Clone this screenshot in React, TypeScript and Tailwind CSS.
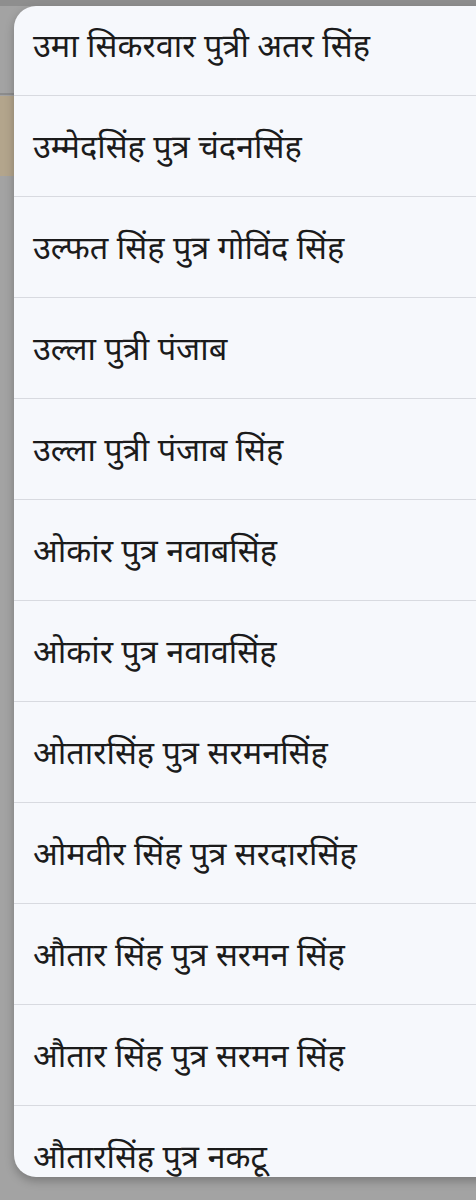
const names = [
  "उमा सिकरवार पुत्री अतर सिंह",
  "उम्मेदसिंह पुत्र चंदनसिंह",
  "उल्फत सिंह पुत्र गोविंद सिंह",
  "उल्ला पुत्री पंजाब",
  "उल्ला पुत्री पंजाब सिंह",
  "ओकांर पुत्र नवाबसिंह",
  "ओकांर पुत्र नवावसिंह",
  "ओतारसिंह पुत्र सरमनसिंह",
  "ओमवीर सिंह पुत्र सरदारसिंह",
  "औतार सिंह पुत्र सरमन सिंह",
  "औतार सिंह पुत्र सरमन सिंह",
  "औतारसिंह पुत्र नकटू",
];

export default function App() {
  return (
    <div className="relative h-[1200px] w-[476px] overflow-hidden bg-[#a3a3a3]">
      {/* dimmed page behind the sheet */}
      <div className="h-[6px] bg-[#8e8e8e]" />
      <div className="absolute left-0 top-[93px] h-[2px] w-[14px] bg-[#8c8c8c]" />
      <div className="absolute left-0 top-[96px] h-[80px] w-[14px] bg-[#b3a58c]" />

      <div className="absolute left-[14px] top-[6px] h-[1171px] w-[480px] overflow-hidden rounded-l-[22px] bg-[#f6f8fc] shadow-[0_4px_10px_rgba(0,0,0,0.25)]">
        <ul className="-mt-[11px]">
          {names.map((name, i) => (
            <li
              key={i}
              className="flex h-[101px] items-center border-b border-[#d8dae0] pl-[19px] pt-[1px] text-[32.5px] text-[#1b1b1b]"
              style={{ fontFamily: '"Noto Sans", "Noto Sans Devanagari", sans-serif' }}
            >
              {name}
            </li>
          ))}
        </ul>
      </div>
    </div>
  );
}
